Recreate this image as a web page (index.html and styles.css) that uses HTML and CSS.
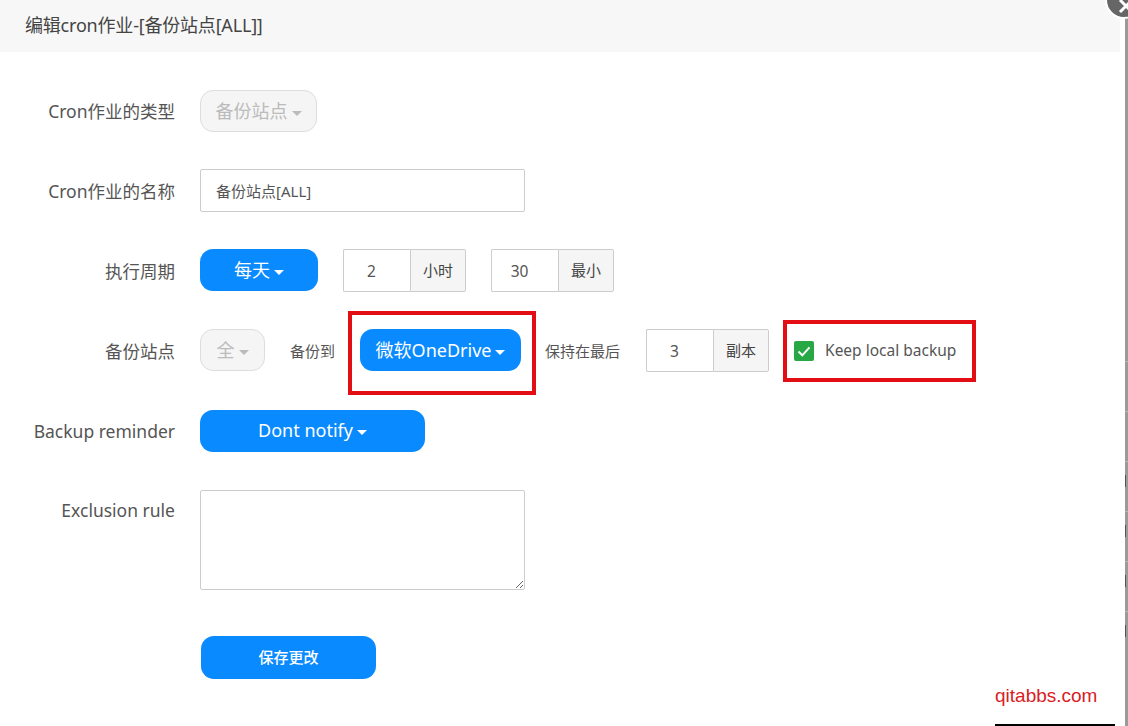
FILE: index.html
```html
<!DOCTYPE html>
<html lang="zh">
<head>
<meta charset="utf-8">
<title>编辑cron作业</title>
<link rel="stylesheet" href="styles.css">
</head>
<body>
<div class="modal">
  <header class="modal-head">编辑cron作业-[备份站点[ALL]]</header>
  <form class="form">
    <div class="row">
      <label class="label">Cron作业的类型</label>
      <button type="button" class="btn disabled w-type">备份站点<i class="caret"></i></button>
    </div>
    <div class="row">
      <label class="label">Cron作业的名称</label>
      <input class="field name" type="text" value="备份站点[ALL]">
    </div>
    <div class="row">
      <label class="label">执行周期</label>
      <button type="button" class="btn primary w-day">每天<i class="caret"></i></button>
      <div class="group"><input class="group-input" type="text" value="2"><span class="addon">小时</span></div>
      <div class="group"><input class="group-input" type="text" value="30"><span class="addon">最小</span></div>
    </div>
    <div class="row row-wide">
      <label class="label">备份站点</label>
      <button type="button" class="btn disabled w-all">全<i class="caret"></i></button>
      <span class="note">备份到</span>
      <button type="button" class="btn primary w-drive">微软OneDrive<i class="caret"></i></button>
      <span class="note keep">保持在最后</span>
      <div class="group"><input class="group-input" type="text" value="3"><span class="addon">副本</span></div>
      <div class="check">
        <svg class="check-box" viewBox="0 0 20 20" width="20" height="20"><rect width="20" height="20" rx="2" fill="#28a745"/><path d="M4.5 10.5l3.8 3.8 7.2-8" fill="none" stroke="#fff" stroke-width="2"/></svg>
        <span class="check-text">Keep local backup</span>
      </div>
    </div>
    <div class="row row-wide">
      <label class="label">Backup reminder</label>
      <button type="button" class="btn primary w-notify">Dont notify<i class="caret"></i></button>
    </div>
    <div class="row">
      <label class="label top">Exclusion rule</label>
      <textarea class="field rule"></textarea>
    </div>
    <div class="row save-row">
      <button type="button" class="btn primary save">保存更改</button>
    </div>
  </form>
</div>
<div class="close"><svg viewBox="0 0 20 20" width="20" height="20"><path d="M4 2l12 12M16 2L4 14" stroke="#fff" stroke-width="3" fill="none"/></svg></div>
<div class="mark mark-drive"></div>
<div class="mark mark-check"></div>
<div class="watermark">qitabbs.com</div>
</body>
</html>
```

FILE: styles.css
```css
* { box-sizing: border-box; }
html, body { margin: 0; height: 726px; overflow: hidden; }
body {
  width: 1128px;
  position: relative;
  font-family: "Noto Sans", "Noto Sans CJK SC", sans-serif;
  color: #555;
  background-color: #9a999b;
  background-image:
    repeating-linear-gradient(to bottom, #555 0 12px, transparent 12px 50px),
    repeating-linear-gradient(to bottom, transparent 0 49px, #b4b3b5 49px 50px);
  background-size: 1px 170px, 3px 300px;
  background-position: 1125px 475px, 1125px 312px;
  background-repeat: no-repeat;
}
.modal { width: 1125px; height: 726px; background: #fff; }
.modal-head {
  height: 52px;
  width: 1120px;
  padding-left: 25px;
  line-height: 50px;
  font-size: 18px;
  color: #444;
  background: #f7f7f7;
  letter-spacing: -0.2px;
}
.form { padding-top: 38px; display: flex; flex-direction: column; }
.row { display: flex; align-items: center; min-height: 42px; margin-bottom: 37px; }
.row-wide { margin-bottom: 38px; }
.label {
  width: 175px;
  margin-right: 25px;
  text-align: right;
  font-size: 17.5px;
  line-height: 40px;
  color: #555;
  white-space: nowrap;
}
.label.top { align-self: flex-start; }
.btn {
  align-self: flex-start;
  height: 42px;
  padding: 0 0 2px;
  border: 1px solid transparent;
  border-radius: 13px;
  font: inherit;
  font-size: 18px;
  white-space: nowrap;
}
.primary { background: #0a8aff; color: #fff; }
.disabled { background: #f5f5f5; border-color: #ddd; color: #bbb; }
.caret {
  display: inline-block;
  margin-left: 4px;
  vertical-align: middle;
  border-top: 5px solid currentColor;
  border-left: 5px solid transparent;
  border-right: 5px solid transparent;
}
.w-type { width: 117px; }
.w-day { width: 118px; margin-right: 25px; }
.w-all { width: 65px; margin-right: 25px; }
.w-drive { width: 161px; margin-right: 24px; }
.w-notify { width: 225px; }
.save { width: 175px; height: 43px; margin-left: 201px; font-size: 15px; font-weight: 500; }
.save-row { margin-top: 9px; }
.field {
  border: 1px solid #ccc;
  border-radius: 2px;
  font: inherit;
  color: #555;
  outline: none;
}
.name { width: 325px; height: 43px; padding: 0 15px; font-size: 15px; }
.rule { width: 325px; height: 100px; display: block; }
.group { display: flex; width: 123px; height: 43px; margin-right: 25px; }
.group-input {
  width: 67px;
  border: 1px solid #ccc;
  border-right: 0;
  border-radius: 2px 0 0 2px;
  padding: 0 11px 0 0;
  text-align: center;
  font: inherit;
  font-size: 15.5px;
  color: #555;
  outline: none;
}
.addon {
  flex: 1;
  border: 1px solid #ccc;
  border-radius: 0 2px 2px 0;
  background: #f5f5f5;
  text-align: center;
  line-height: 41px;
  font-size: 15px;
  color: #444;
}
.note { font-size: 15px; color: #555; margin-right: 25px; white-space: nowrap; }
.keep { margin-right: 26px; }
.check { display: flex; align-items: center; gap: 11px; font-size: 15.5px; color: #555; white-space: nowrap; }
.check-box { flex: none; }
.check-text { line-height: 20px; padding-bottom: 1px; }
.close {
  position: absolute;
  left: 1105px;
  top: -19px;
  width: 38px;
  height: 38px;
  padding: 15px 0 0 9px;
  border: 2px solid #fff;
  border-radius: 50%;
  background: #666;
}
.close svg { display: block; }
.mark { position: absolute; border: 4px solid #e30d14; }
.mark-drive { left: 348px; top: 311px; width: 188px; height: 84px; }
.mark-check { left: 783px; top: 320px; width: 193px; height: 62px; }
.watermark {
  position: absolute;
  left: 995px;
  top: 685px;
  width: 120px;
  height: 41px;
  border-bottom: 2px solid #000;
  font-family: "Liberation Sans", sans-serif;
  font-size: 19px;
  color: #d9201f;
}
```
